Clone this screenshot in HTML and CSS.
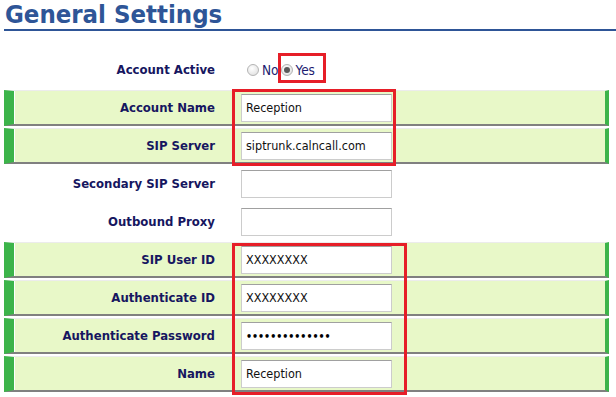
FILE: index.html
```html
<!DOCTYPE html>
<html>
<head>
<meta charset="utf-8">
<link rel="stylesheet" href="styles.css">
</head>
<body>
<div class="page">
  <h1 class="title">General Settings</h1>
  <div class="form">
    <div class="row plain">
      <div class="label">Account Active</div>
      <div class="radios">
        <span class="radio"></span><span class="rtext">No</span>
        <span class="radio checked"></span><span class="rtext">Yes</span>
      </div>
    </div>
    <div class="row hl">
      <div class="label">Account Name</div>
      <input class="field" type="text" value="Reception">
    </div>
    <div class="row hl">
      <div class="label">SIP Server</div>
      <input class="field" type="text" value="siptrunk.calncall.com">
    </div>
    <div class="row plain">
      <div class="label">Secondary SIP Server</div>
      <input class="field" type="text" value="">
    </div>
    <div class="row plain">
      <div class="label">Outbound Proxy</div>
      <input class="field" type="text" value="">
    </div>
    <div class="row hl">
      <div class="label">SIP User ID</div>
      <input class="field" type="text" value="XXXXXXXX">
    </div>
    <div class="row hl">
      <div class="label">Authenticate ID</div>
      <input class="field" type="text" value="XXXXXXXX">
    </div>
    <div class="row hl">
      <div class="label">Authenticate Password</div>
      <input class="field pw" type="password" value="abcdefghijklmn">
    </div>
    <div class="row hl">
      <div class="label">Name</div>
      <input class="field" type="text" value="Reception">
    </div>
  </div>
  <div class="mark mark-yes"></div>
  <div class="mark mark-server"></div>
  <div class="mark mark-auth"></div>
</div>
</body>
</html>
```

FILE: styles.css
```css
html, body {
  margin: 0;
  padding: 0;
  background: #ffffff;
}
.page {
  position: relative;
  width: 616px;
  height: 397px;
  overflow: hidden;
  padding-left: 4px;
  box-sizing: border-box;
  font-family: "DejaVu Sans Condensed", "DejaVu Sans", sans-serif;
  font-stretch: condensed;
}
.title {
  margin: 0;
  padding: 1px 0 0 1px;
  height: 31px;
  box-sizing: border-box;
  font-size: 25.5px;
  line-height: 27px;
  font-weight: bold;
  color: #2e5597;
  border-bottom: 2px solid #2e5597;
}
.form {
  margin-top: 21px;
  width: 605px;
}
.row {
  display: flex;
  align-items: center;
  height: 36px;
  margin-bottom: 2px;
  box-sizing: border-box;
  border-top: 1px solid transparent;
  border-bottom: 2px solid transparent;
  border-left: 10px solid transparent;
  border-right: 4px solid transparent;
}
.row.hl {
  background: #e8f8c8;
  border-top-color: #ececec;
  border-bottom-color: #808080;
  border-left-color: #3cb44a;
  border-right-color: #3cb44a;
  box-shadow: inset 1px 0 0 #ffffff;
}
.label {
  width: 201px;
  text-align: right;
  font-size: 13px;
  font-weight: bold;
  color: #161660;
  flex: none;
}
.field {
  margin: 0 0 0 26px;
  width: 151px;
  height: 28px;
  box-sizing: border-box;
  border: 1px solid #cccccc;
  border-top-color: #a0a0a0;
  background: #ffffff;
  padding: 0 0 0 4px;
  font-family: "DejaVu Sans Condensed", "DejaVu Sans", sans-serif;
  font-stretch: condensed;
  font-size: 12.5px;
  color: #111111;
  outline: none;
}
.field.pw {
  font-size: 10.5px;
  font-weight: bold;
  color: #000000;
}
.radios {
  display: flex;
  align-items: center;
  margin-left: 32px;
}
.radio {
  width: 12px;
  height: 12px;
  box-sizing: border-box;
  border-radius: 50%;
  border: 1px solid #b4b4b4;
  background: radial-gradient(circle at 40% 35%, #ffffff 0%, #e6e6e6 70%, #d4d4d4 100%);
  position: relative;
  flex: none;
}
.radio.checked {
  margin-left: 2px;
}
.radio.checked::after {
  content: "";
  position: absolute;
  left: 2px;
  top: 2px;
  width: 6px;
  height: 6px;
  border-radius: 50%;
  background: #5a5a5a;
}
.rtext {
  font-size: 13.5px;
  color: #1c1c70;
  margin-left: 3px;
}
.mark {
  position: absolute;
  border: 3px solid #e61e28;
  box-sizing: border-box;
}
.mark-yes {
  left: 278px;
  top: 53px;
  width: 48px;
  height: 30px;
}
.mark-server {
  left: 232px;
  top: 89px;
  width: 164px;
  height: 77px;
}
.mark-auth {
  left: 232px;
  top: 243px;
  width: 175px;
  height: 152px;
}
```
